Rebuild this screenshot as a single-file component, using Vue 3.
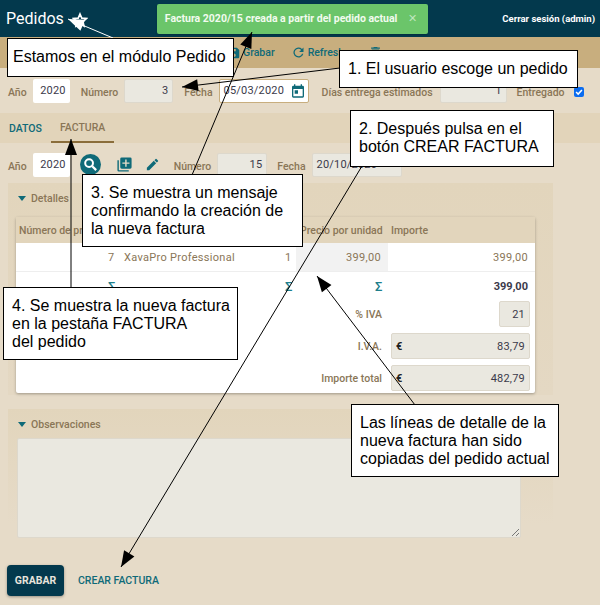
<template>
  <div class="page">
    <header class="topbar">
      <div class="title">Pedidos</div>
      <svg class="star" viewBox="0 0 24 24" width="16" height="16"><path d="M12 3l2.700 6.200 6.800.6-5.100 4.500 1.500 6.600L12 17.400l-5.900 3.500 1.500-6.600-5.100-4.500 6.800-.6z" fill="none" stroke="#fff" stroke-width="2.500"/></svg>
      <div class="toast">
        <span>Factura 2020/15 creada a partir del pedido actual</span>
        <span class="toast-x">✕</span>
      </div>
      <div class="logout">Cerrar sesión (admin)</div>
    </header>

    <nav class="toolbar">
      <span class="tool tool-save">
        <svg viewBox="0 0 24 24" width="14" height="14"><path d="M15 9H5V5h10m-3 14a3 3 0 1 1 0-6 3 3 0 0 1 0 6m5-16H5a2 2 0 0 0-2 2v14a2 2 0 0 0 2 2h14a2 2 0 0 0 2-2V7z" fill="#0f6a78"/></svg>
        Grabar
      </span>
      <span class="tool tool-refresh">
        <svg viewBox="0 0 24 24" width="15" height="15"><path d="M17.600 6.400A8 8 0 1 0 19.700 14h-2.100a6 6 0 1 1-1.400-6.200L13 11h7V4z" fill="#0f6a78"/></svg>
        Refresh
      </span>
      <span class="tool tool-trash">
        <svg viewBox="0 0 24 24" width="15" height="15"><path d="M19 4h-3.500l-1-1h-5l-1 1H5v2h14M6 19a2 2 0 0 0 2 2h8a2 2 0 0 0 2-2V7H6z" fill="#0f6a78"/></svg>
      </span>
    </nav>

    <section class="form-row order-row">
      <label class="lbl">Año</label>
      <div class="input white y1">2020</div>
      <label class="lbl">Número</label>
      <div class="input gray n1">3</div>
      <label class="lbl">Fecha</label>
      <div class="input date">
        <span>05/03/2020</span>
        <svg viewBox="0 0 24 24" width="16" height="16"><path d="M19 4h-1V2h-2v2H8V2H6v2H5a2 2 0 0 0-2 2v14a2 2 0 0 0 2 2h14a2 2 0 0 0 2-2V6a2 2 0 0 0-2-2m0 16H5V9h14zM7 11h5v5H7z" fill="#0f6a78"/></svg>
      </div>
      <label class="lbl">Días entrega estimados</label>
      <div class="input gray d1">1</div>
      <label class="lbl">Entregado</label>
      <span class="check">
        <svg viewBox="0 0 12 12" width="10" height="10"><path d="M2.500 6l2.500 2.500 4.500-5" fill="none" stroke="#fff" stroke-width="1.800"/></svg>
      </span>
    </section>

    <div class="tabs">
      <span class="tab">DATOS</span>
      <span class="tab active">FACTURA</span>
    </div>

    <section class="form-row invoice-row">
      <label class="lbl">Año</label>
      <div class="input white y1">2020</div>
      <span class="search">
        <svg viewBox="0 0 24 24" width="17" height="17"><circle cx="10" cy="10" r="5.500" fill="none" stroke="#fff" stroke-width="2.800"/><path d="M14.500 14.500L20 20" stroke="#fff" stroke-width="3.200"/></svg>
      </span>
      <svg class="ic-add" viewBox="0 0 24 24" width="17" height="17"><path d="M4 6H2v14a2 2 0 0 0 2 2h14v-2H4zm16-4H8a2 2 0 0 0-2 2v12a2 2 0 0 0 2 2h12a2 2 0 0 0 2-2V4a2 2 0 0 0-2-2m-1 9h-4v4h-2v-4H9V9h4V5h2v4h4z" fill="#0f6a78"/></svg>
      <svg class="ic-edit" viewBox="0 0 24 24" width="15" height="15"><path d="M3 17.250V21h3.750L17.800 9.940l-3.750-3.750zM20.700 7a1 1 0 0 0 0-1.410l-2.340-2.340a1 1 0 0 0-1.410 0l-1.830 1.830 3.750 3.750z" fill="#0f6a78"/></svg>
      <label class="lbl n-lbl">Número</label>
      <div class="input gray n2">15</div>
      <label class="lbl">Fecha</label>
      <div class="input gray f2">20/10/2020</div>
    </section>

    <section class="box details">
      <div class="box-title"><i class="caret"></i>Detalles</div>
      <div class="table">
        <div class="thead">
          <span class="th-num">Número de producto</span>
          <span class="th-price">Precio por unidad</span>
          <span class="th-amount">Importe</span>
        </div>
        <div class="trow">
          <span class="c-num">7</span>
          <span class="c-name">XavaPro Professional</span>
          <span class="c-qty">1</span>
          <span class="c-price">399,00</span>
          <span class="c-amount">399,00</span>
        </div>
        <div class="tsum">
          <span class="s1">Σ</span>
          <span class="s2">Σ</span>
          <span class="s3">Σ</span>
          <b class="s-total">399,00</b>
        </div>
        <div class="tfoot">
          <label class="lbl">% IVA</label>
          <div class="input gray vat">21</div>
        </div>
        <div class="tfoot" v-for="t in totals" :key="t.label">
          <label class="lbl">{{ t.label }}</label>
          <div class="input gray money"><b>€</b><span>{{ t.value }}</span></div>
        </div>
      </div>
    </section>

    <section class="box notes">
      <div class="box-title"><i class="caret"></i>Observaciones</div>
      <div class="textarea">
        <svg viewBox="0 0 10 10" width="10" height="10"><path d="M9 2L2 9M9 6L6 9" stroke="#777" stroke-width="1"/></svg>
      </div>
    </section>

    <footer class="actions">
      <button class="btn-main">GRABAR</button>
      <span class="btn-link">CREAR FACTURA</span>
    </footer>

    <svg class="arrows" width="600" height="605">
      <g v-for="(a, i) in arrows" :key="i">
        <line :x1="a.x1" :y1="a.y1" :x2="a.x2" :y2="a.y2" :stroke="a.color" stroke-width="1"/>
        <polygon :points="head(a)" :fill="a.color"/>
      </g>
    </svg>

    <div v-for="c in callouts" :key="c.id" class="callout" :class="c.id">
      <div v-for="line in c.lines" :key="line">{{ line }}</div>
    </div>
  </div>
</template>

<script setup>
const totals = [
  { label: "I.V.A.", value: "83,79" },
  { label: "Importe total", value: "482,79" }
];

const arrows = [
  { x1: 113, y1: 38, x2: 68, y2: 19, color: "#fff" },
  { x1: 192, y1: 175, x2: 252, y2: 32, color: "#000" },
  { x1: 340, y1: 68, x2: 182, y2: 87, color: "#000" },
  { x1: 362, y1: 166, x2: 121, y2: 567, color: "#000" },
  { x1: 71, y1: 288, x2: 71, y2: 139, color: "#000" },
  { x1: 415, y1: 405, x2: 317, y2: 276, color: "#000" }
];

// arrow head: triangle of fixed size, pointing at x2,y2
function head(a) {
  const dx = a.x1 - a.x2;
  const dy = a.y1 - a.y2;
  const len = Math.hypot(dx, dy);
  const ux = dx / len;
  const uy = dy / len;
  const bx = a.x2 + ux * 16;
  const by = a.y2 + uy * 16;
  const w = 6;
  return `${a.x2},${a.y2} ${bx - uy * w},${by + ux * w} ${bx + uy * w},${by - ux * w}`;
}

const callouts = [
  { id: "c-module", lines: ["Estamos en el módulo Pedido"] },
  { id: "c-step1", lines: ["1. El usuario escoge un pedido"] },
  { id: "c-step2", lines: ["2. Después pulsa en el", "botón CREAR FACTURA"] },
  { id: "c-step3", lines: ["3. Se muestra un mensaje", "confirmando la creación de", "la nueva factura"] },
  { id: "c-step4", lines: ["4. Se muestra la nueva factura", "en la pestaña FACTURA", "del pedido"] },
  { id: "c-lines", lines: ["Las líneas de detalle de la", "nueva factura han sido", "copiadas del pedido actual"] }
];
</script>

<style>
html, body { margin: 0; background: #e6dbc8; }
</style>

<style scoped>
.page {
  position: relative;
  width: 600px;
  height: 605px;
  overflow: hidden;
  background: #e6dbc8;
  font-family: Roboto, "Liberation Sans", sans-serif;
  font-size: 10.500px;
  color: #3b3a4a;
}

.topbar {
  height: 37px;
  background: #03394d;
  display: flex;
  align-items: center;
  padding: 0 5px 0 6px;
  color: #fff;
}
.title { font-size: 16px; margin-right: 8px; white-space: nowrap; }
.star { margin-right: 69px; margin-top: 3px; flex: none; }
.toast {
  height: 30px;
  width: 271px;
  flex: none;
  box-sizing: border-box;
  background: #6bc56a;
  border-radius: 2px;
  display: flex;
  align-items: center;
  padding-left: 8px;
  font-weight: 700;
  font-size: 10.500px;
  white-space: nowrap;
  color: #f2fbef;
  box-shadow: 0 1px 2px rgba(0,0,0,.2);
}
.toast-x { margin-left: 11px; font-size: 11px; color: #bfe6bd; font-weight: 400; }
.logout { margin-left: auto; font-size: 9.500px; font-weight: 700; white-space: nowrap; }

.toolbar {
  height: 31px;
  background: #c8ae7e;
  display: flex;
  align-items: center;
  padding-left: 227px;
  color: #0f6a78;
  font-weight: 500;
  font-size: 10.500px;
}
.tool { display: flex; align-items: center; gap: 2px; }
.tool-refresh { margin-left: 16px; }
.tool-trash { margin-left: 24px; }

.form-row {
  display: flex;
  align-items: center;
  padding-left: 8px;
}
.order-row { height: 45px; background: #e6dbc8; }
.invoice-row { height: 37px; margin-top: 3px; }

.lbl {
  color: #8a7657;
  font-weight: 500;
  font-size: 10.500px;
  padding-top: 3px;
  white-space: nowrap;
}
.input {
  height: 24px;
  box-sizing: border-box;
  flex: none;
  border-radius: 2px;
  display: flex;
  align-items: center;
  justify-content: flex-end;
  padding: 0 4px;
  font-size: 11px;
  letter-spacing: .2px;
  color: #3b3a4a;
}
.white { background: #fff; }
.gray { background: #eae8e0; border: 1px solid #ddd8cc; }
.y1 { width: 37px; margin: 0 11px 0 6px; }
.n1 { width: 49px; margin: 0 11px 0 6px; }
.date {
  width: 90px;
  margin: 0 13px 0 6px;
  background: #fff;
  border: 1px solid #c8ae7e;
  justify-content: space-between;
  padding: 0 2px 0 4px;
}
.d1 { width: 67px; margin: 0 10px 0 7px; }
.check {
  width: 10px;
  height: 10px;
  flex: none;
  margin-left: 9px;
  margin-top: 2px;
  background: #0a6cf0;
  border-radius: 2px;
  display: flex;
}

.tabs {
  height: 30px;
  background: #e2d4ba;
  display: flex;
  align-items: center;
  padding-left: 9px;
  gap: 9px;
  font-weight: 500;
  font-size: 10.500px;
}
.tab { color: #0f6a78; }
.tab.active {
  color: #8a7657;
  height: 30px;
  line-height: 30px;
  box-sizing: border-box;
  border-bottom: 2px solid #8a6d3b;
  padding: 0 9px;
}

.search {
  width: 21px;
  height: 21px;
  flex: none;
  border-radius: 50%;
  background: #0f6a78;
  display: flex;
  align-items: center;
  justify-content: center;
  margin-left: -1px;
}
.ic-add { margin-left: 15px; flex: none; }
.ic-edit { margin-left: 12px; flex: none; }
.n-lbl { margin-left: 14px; }
.n2 { width: 50px; margin: 0 10px 0 6px; }
.f2 { width: 90px; margin-left: 6px; justify-content: flex-start; }

.box {
  margin: 0 47px 0 8px;
  padding: 0 8px;
}
.details {
  height: 212px;
  padding-top: 7px;
  box-sizing: border-box;
  background: linear-gradient(#e2d5bc, #e4d8c3);
}
.box-title {
  display: flex;
  align-items: center;
  color: #8a7657;
  font-weight: 500;
  font-size: 10.500px;
  height: 17px;
  padding-left: 2px;
}
.caret {
  width: 0;
  height: 0;
  border: 4px solid transparent;
  border-top: 5px solid #0f6a78;
  border-bottom: 0;
  margin-right: 5px;
}
.table {
  margin: 10px 10px 0 0;
  width: 519px;
  background: #fff;
  border-radius: 2px;
  box-shadow: 0 1px 3px rgba(0,0,0,.3);
  height: 176px;
  color: #8a7657;
}
.thead {
  height: 26px;
  background: #e2d5bc;
  display: flex;
  align-items: center;
  padding-left: 3px;
  font-weight: 500;
  color: #8a7657;
  white-space: nowrap;
}
.th-num { width: 281px; overflow: hidden; }
.th-price { width: 91px; }
.trow {
  height: 29px;
  display: flex;
  align-items: center;
  border-bottom: 1px solid #eee;
  box-sizing: border-box;
  font-size: 11px;
  letter-spacing: .3px;
  white-space: nowrap;
}
.c-num { margin-left: 92px; width: 16px; }
.c-name { width: 161px; }
.c-qty { width: 11px; }
.c-price {
  width: 92px;
  height: 100%;
  box-sizing: border-box;
  background: #f2f2f2;
  display: flex;
  align-items: center;
  justify-content: flex-end;
  padding-right: 7px;
}
.c-amount { flex: 1; text-align: right; padding-right: 7px; }
.tsum {
  height: 28px;
  margin-bottom: -2px;
  display: flex;
  align-items: center;
  color: #1f7f8c;
  font-size: 13px;
  font-weight: 500;
}
.s1 { margin-left: 92px; width: 177px; }
.s2 { width: 90px; }
.s3 { width: 20px; }
.s-total { flex: 1; text-align: right; padding-right: 7px; color: #3b3a4a; font-size: 11px; }
.tfoot {
  height: 32px;
  display: flex;
  align-items: center;
  justify-content: flex-end;
  padding-right: 5px;
  gap: 9px;
}
.tfoot .lbl { padding-top: 0; }
.vat { width: 31px; height: 26px; margin-left: 108px; }
.money { width: 139px; height: 26px; justify-content: space-between; }
.money b { font-size: 11px; color: #222; }

.notes {
  margin-top: 14px;
  height: 136px;
  padding-top: 7px;
  box-sizing: border-box;
  background: linear-gradient(#e2d5bc, #e6dbc8 85%);
}
.textarea {
  margin: 5px 24px 0 1px;
  height: 100px;
  box-sizing: border-box;
  background: #eae8e0;
  border: 1px solid #ddd8cc;
  border-radius: 2px;
  display: flex;
  justify-content: flex-end;
  align-items: flex-end;
}

.actions {
  display: flex;
  align-items: center;
  padding: 20px 0 0 7px;
  gap: 14px;
}
.btn-main {
  width: 57px;
  height: 31px;
  border: none;
  border-radius: 4px;
  background: #03394d;
  color: #e8e4dc;
  font: 700 10.500px Roboto, "Liberation Sans", sans-serif;
  box-shadow: 0 1px 3px rgba(0,0,0,.35);
}
.btn-link { color: #0f6a78; font-weight: 500; font-size: 10.500px; }

.arrows { position: absolute; left: 0; top: 0; pointer-events: none; }

.callout {
  position: absolute;
  box-sizing: border-box;
  background: #fff;
  border: 1px solid #000;
  color: #000;
  font-family: "Liberation Sans", Arial, sans-serif;
  font-size: 16px;
  line-height: 18px;
  white-space: nowrap;
  padding: 9px 0 0 8px;
}
.c-module { left: 7px; top: 38px; width: 227px; height: 39px; padding-left: 5px; }
.c-step1 { left: 339px; top: 50px; width: 239px; height: 38px; }
.c-step2 { left: 350px; top: 110px; width: 204px; height: 57px; }
.c-step3 { left: 82px; top: 174px; width: 221px; height: 73px; }
.c-step4 { left: 3px; top: 287px; width: 235px; height: 73px; }
.c-lines { left: 351px; top: 404px; width: 208px; height: 73px; }
</style>
